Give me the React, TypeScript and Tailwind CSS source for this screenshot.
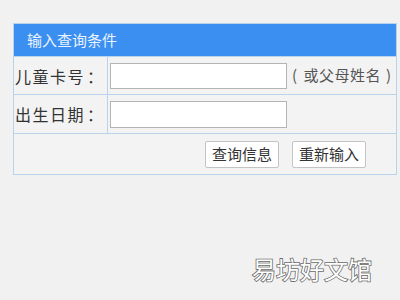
export default function App() {
  const font = { fontFamily: '"Noto Sans CJK SC", "Noto Sans", sans-serif' };
  return (
    <div className="w-[400px] h-[300px] bg-[#f1f1f1] overflow-hidden relative" style={font}>
      <div className="pt-[23px] pl-[13px]">
        <div className="w-[384px] border border-[#b9d3ec] bg-[#f3f3f3]">
          {/* header */}
          <div className="h-[32px] bg-[#3a8ff0] flex items-center pl-[13px] text-[15px] text-[#eaf3ff]">
            输入查询条件
          </div>
          {/* row 1 */}
          <div className="flex h-[38px] border-t border-[#b9d3ec]">
            <div className="w-[94px] shrink-0 border-r border-[#b9d3ec] flex items-center pl-[1px] text-[16px] tracking-[1.5px] text-[#333]">
              儿童卡号<span className="ml-[2px]">：</span>
            </div>
            <div className="flex items-center pl-[2px]">
              <div className="w-[177px] h-[26px] bg-white border border-[#b4b4b4]" />
              <span className="ml-[5px] text-[15px] tracking-[0.5px] text-[#555] whitespace-nowrap">
                <span className="mr-[6px]">(</span>或父母姓名<span className="ml-[5px]">)</span>
              </span>
            </div>
          </div>
          {/* row 2 */}
          <div className="flex h-[39px] border-t border-[#b9d3ec]">
            <div className="w-[94px] shrink-0 border-r border-[#b9d3ec] flex items-center pl-[1px] text-[16px] tracking-[1.5px] text-[#333]">
              出生日期<span className="ml-[2px]">：</span>
            </div>
            <div className="flex items-center pl-[2px]">
              <div className="w-[177px] h-[27px] bg-white border border-[#b4b4b4]" />
            </div>
          </div>
          {/* row 3 */}
          <div className="flex h-[41px] border-t border-[#b9d3ec] items-center pl-[191px] gap-[13px]">
            <button className="w-[74px] h-[27px] bg-white border border-[#c4c4c4] rounded-[2px] text-[15px] text-[#333]">
              查询信息
            </button>
            <button className="w-[74px] h-[27px] bg-white border border-[#c4c4c4] rounded-[2px] text-[15px] text-[#333]">
              重新输入
            </button>
          </div>
        </div>
      </div>
      {/* watermark */}
      <div className="absolute left-[252px] top-[251px] text-[24px] text-white [-webkit-text-stroke:1.6px_#6a6a6a] [paint-order:stroke_fill]">
        易坊好文馆
      </div>
    </div>
  );
}
